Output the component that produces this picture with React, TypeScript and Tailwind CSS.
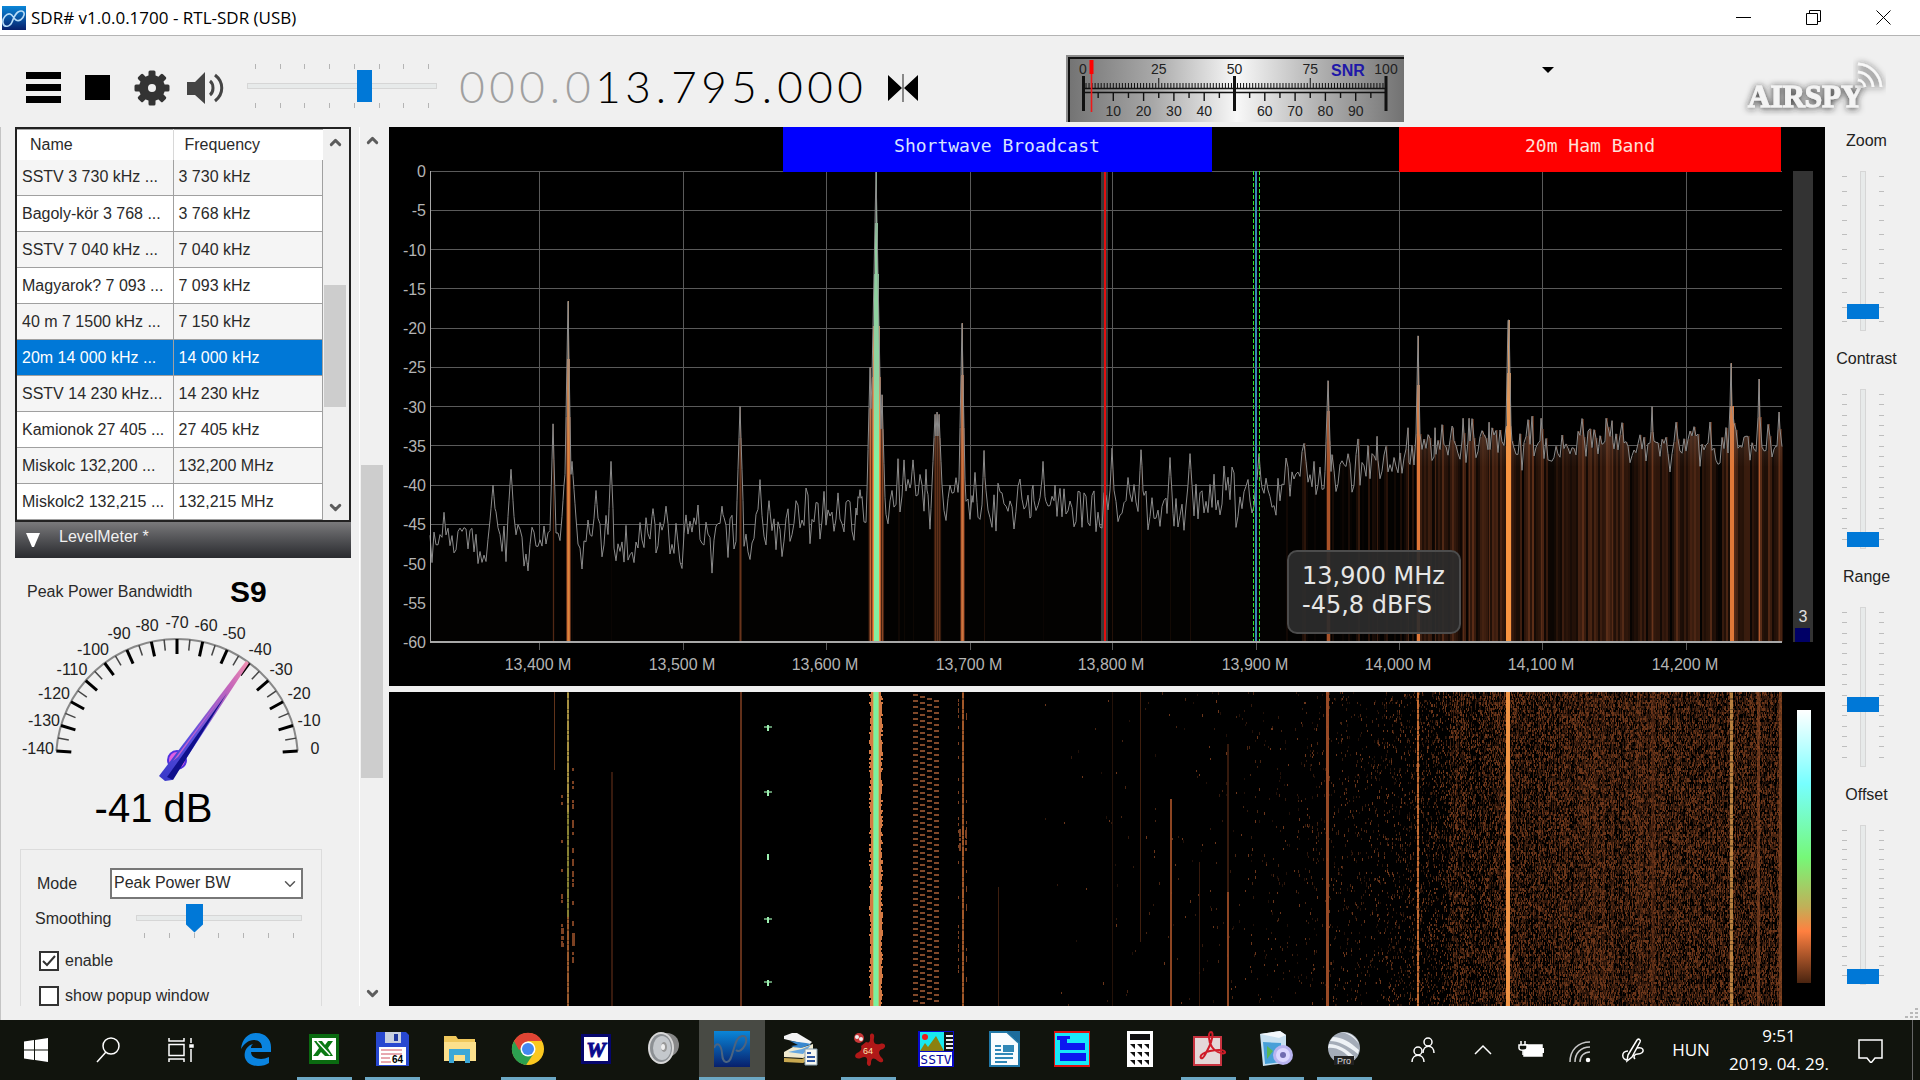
import type { ReactNode } from "react";
import { ChevronDown, ChevronUp } from "lucide-react";

const FONT = "'Liberation Sans', Arial, sans-serif";

/* ---------- helpers ---------- */

/** Small deterministic generator so the noise floor is the same on each render. */
function makeRandom(seed: number) {
  let s = seed;
  return () => {
    s = (s * 1664525 + 1013904223) % 4294967296;
    return s / 4294967296;
  };
}

function range(n: number) {
  return Array.from({ length: n }, (_, i) => i);
}

function lerpTable(table: number[][], x: number) {
  if (x <= table[0][0]) return table[0][1];
  for (let i = 1; i < table.length; i++) {
    const [x1, y1] = table[i];
    const [x0, y0] = table[i - 1];
    if (x <= x1) return y0 + ((y1 - y0) * (x - x0)) / (x1 - x0);
  }
  return table[table.length - 1][1];
}

const palette: [number, number[]][] = [
  [-37.5, [3, 2, 1]],
  [-35, [40, 19, 9]],
  [-32, [84, 42, 22]],
  [-30, [104, 52, 28]],
  [-26, [190, 96, 50]],
  [-19, [248, 148, 64]],
  [-10, [240, 160, 80]],
];

function levelColor(db: number) {
  const channel = (c: number) => Math.round(lerpTable(palette.map(([l, rgb]) => [l, rgb[c]]), db));
  return `rgb(${channel(0)},${channel(1)},${channel(2)})`;
}

/* ---------- spectrum ---------- */

const PLOT = { left: 41, right: 1393, top: 44, bottom: 515 };
const dbToY = (db: number) => PLOT.top + (-db / 60) * (PLOT.bottom - PLOT.top);

const floor = [
  [41, -47.3], [210, -47.6], [350, -46.2], [430, -45.2], [470, -44], [490, -42.5],
  [540, -41.5], [620, -43.6], [723, -43.4], [810, -42], [870, -41], [910, -39],
  [950, -38.4], [1010, -36.8], [1050, -35.8], [1110, -35], [1393, -34.8],
];

// x, level, half width
const peaks = [
  [104, -40, 4], [122, -38, 4], [164, -32.2, 3], [175, -40, 3], [179, -16.6, 4], [183, -37, 5], [207, -40.7, 3],
  [222, -37, 3], [264, -43, 3], [277, -42.7, 3], [333, -42.7, 3], [351, -30, 4],
  [380, -42, 3], [449, -41, 3], [471, -40.6, 5], [487, 0, 7], [481, -25, 4], [493, -28.5, 4],
  [503, -40.7, 5], [515, -36.8, 4], [524, -36.8, 6], [537, -38, 3], [546, -31, 5], [548, -30.7, 5], [550, -31, 5],
  [573, -19.4, 4], [586, -38.4, 4], [595, -35.6, 3], [644, -40, 3], [654, -37, 4], [666, -40, 3],
  [723, -35.3, 4], [752, -35.5, 4], [781, -36.5, 4], [801, -36, 5], [870, -36, 6], [939, -26.7, 5],
  [988, -33.8, 4], [1019, -32.7, 3], [1029, -21, 4], [1046, -32.7, 3], [1053, -32.3, 3],
  [1064, -32.7, 3], [1074, -31.5, 5], [1080, -31.5, 5], [1100, -32, 4], [1119, -19, 4], [1120, -19, 4],
  [1152, -31.5, 5], [1217, -31.5, 5], [1223, -31.8, 5], [1263, -30, 5], [1287, -32, 4],
  [1342, -24.5, 4], [1370, -26.5, 4], [1390, -30.7, 7],
];

const trace = (() => {
  const random = makeRandom(1700);
  const points: { x: number; db: number }[] = [];
  let slow = 0;
  for (let x = PLOT.left; x <= PLOT.right; x++) {
    slow = slow * 0.6 + (random() - 0.5) * 2.6;
    const spread = x > 1000 ? 3.6 : 5.2;
    let db = lerpTable(floor, x) + slow + (random() - 0.5) * spread;
    if (random() > 0.95) db += x > 1000 ? 1.5 : 2.5;
    let onPeak = false;
    for (const [px, level, half] of peaks) {
      const d = Math.abs(x - px);
      if (d >= half) continue;
      const value = level - (d / half) * (level + 46);
      if (value > db) {
        db = value;
        onPeak = true;
      }
    }
    if (onPeak || x % 2 === 1) points.push({ x, db });
  }
  return points;
})();

const tracePath = trace.map((p, i) => `${i ? "L" : "M"}${p.x} ${dbToY(p.db).toFixed(1)}`).join("");
const fillPath = `${tracePath}L${PLOT.right} ${PLOT.bottom}L${PLOT.left} ${PLOT.bottom}Z`;

// strong narrow signals keep one color over a few pixels
const carriers: [number, number, string][] = [
  [487, 2, "#84f0a0"],
  [179, 0, "#d8883c"],
  [573, 0, "#c87840"],
  [939, 1, "#a85228"],
  [1029, 1, "#e07838"],
  [1119, 2, "#f89440"],
  [1342, 1, "#e07838"],
];

function columnColor(x: number, db: number) {
  const carrier = carriers.find(([cx, half]) => Math.abs(x - cx) <= half);
  return carrier ? carrier[2] : levelColor(db);
}

const freqTicks: [number, string][] = [
  [150, "13,400 M"], [294, "13,500 M"], [437, "13,600 M"], [581, "13,700 M"], [723, "13,800 M"],
  [867, "13,900 M"], [1010, "14,000 M"], [1153, "14,100 M"], [1297, "14,200 M"],
];

function Spectrum() {
  return (
    <svg viewBox="0 0 1436 559" className="block h-full w-full bg-black" role="img" aria-label="Spectrum">
      <defs>
        <linearGradient id="veil" x1="0" y1="44" x2="0" y2="340" gradientUnits="userSpaceOnUse">
          <stop offset="0" stopColor="#a0a0a0" stopOpacity="0.5" />
          <stop offset="0.7" stopColor="#a0a0a0" stopOpacity="0.35" />
          <stop offset="1" stopColor="#a0a0a0" stopOpacity="0" />
        </linearGradient>
      </defs>
      <g stroke="#5a5a5a" shapeRendering="crispEdges">
        {range(12).map((i) => (
          <line key={i} x1={PLOT.left} x2={PLOT.right} y1={dbToY(-i * 5)} y2={dbToY(-i * 5)} />
        ))}
        {freqTicks.map(([x]) => (
          <line key={x} x1={x} x2={x} y1={PLOT.top} y2={PLOT.bottom + 8} />
        ))}
      </g>
      <path d={fillPath} fill="#030201" />
      <g shapeRendering="crispEdges">
        {trace.map((p, i) => {
          if (p.db < -37.5) return null;
          const next = trace[i + 1]?.x ?? p.x + 1;
          const y = dbToY(p.db);
          return <rect key={p.x} x={p.x} y={y} width={next - p.x} height={PLOT.bottom - y} fill={columnColor(p.x, p.db)} />;
        })}
      </g>
      <path d={fillPath} fill="url(#veil)" />
      <path d={tracePath} fill="none" stroke="#8c8c8c" strokeLinejoin="round" />
      <g stroke="#a8a8a8" strokeWidth="2" shapeRendering="crispEdges">
        <line x1={PLOT.left} x2={PLOT.left} y1={PLOT.top} y2={PLOT.bottom} strokeWidth="1" />
        <line x1={PLOT.left} x2={PLOT.right} y1={PLOT.bottom} y2={PLOT.bottom} />
      </g>

      {/* tuned frequency and the hovered one */}
      <rect x="712" y="44" width="7" height="470" fill="#8c8c8c" opacity="0.4" />
      <rect x="715" y="44" width="2" height="470" fill="#e01010" />
      <rect x="866" y="44" width="2" height="470" fill="#3a86b8" />
      <g stroke="#2ee82e" strokeWidth="1" strokeDasharray="4 2" shapeRendering="crispEdges">
        <line x1="864" x2="864" y1="44" y2="514" />
        <line x1="870" x2="870" y1="44" y2="514" />
      </g>

      <rect x="394" y="0" width="429" height="45" fill="#0000ff" />
      <rect x="1010" y="0" width="382" height="45" fill="#ff0000" />
      <g fontSize="18" textAnchor="middle" fontFamily="'DejaVu Sans Mono', monospace">
        <text x="608" y="25" fill="#d8e4ff">Shortwave Broadcast</text>
        <text x="1201" y="25" fill="#ffe0d8">20m Ham Band</text>
      </g>

      <g fill="#b4b4b4" fontSize="16" fontFamily={FONT}>
        {range(13).map((i) => (
          <text key={i} x="37" y={Math.round(dbToY(-i * 5)) + 6} textAnchor="end">{i ? -i * 5 : "0"}</text>
        ))}
        {freqTicks.map(([x, label]) => (
          <text key={label} x={x - 1} y="543" textAnchor="middle">{label}</text>
        ))}
      </g>

      <rect x="1404" y="44" width="20" height="471" fill="#333" />
      <rect x="1406" y="501" width="15" height="14" fill="#000066" />
      <text x="1414" y="495" fontSize="16" fill="#e0e0e0" textAnchor="middle" fontFamily={FONT}>3</text>

      <rect x="899" y="424" width="172" height="82" rx="9" fill="#2d2d2d" fillOpacity="0.92" stroke="#4c4c4c" strokeWidth="2" />
      <g fill="#e6e6e6" fontSize="24" fontFamily="'DejaVu Sans', Verdana, sans-serif">
        <text x="913" y="457">13,900 MHz</text>
        <text x="913" y="486">-45,8 dBFS</text>
      </g>
    </svg>
  );
}

/* ---------- waterfall ---------- */

const waterfallLines: { x: number; w: number; from: number; to: number; color: string; opacity: number }[] = [
  { x: 165, w: 1, from: 0, to: 78, color: "#a0552c", opacity: 0.6 },
  { x: 178, w: 2, from: 0, to: 120, color: "#b8a048", opacity: 0.9 },
  { x: 178, w: 2, from: 120, to: 225, color: "#a8a040", opacity: 0.8 },
  { x: 178, w: 2, from: 225, to: 314, color: "#c07038", opacity: 0.8 },
  { x: 222, w: 2, from: 80, to: 314, color: "#5c2c18", opacity: 0.6 },
  { x: 351, w: 2, from: 0, to: 314, color: "#7a3c20", opacity: 0.8 },
  { x: 573, w: 2, from: 0, to: 314, color: "#b4622e", opacity: 0.9 },
  { x: 609, w: 1, from: 195, to: 314, color: "#5a2c16", opacity: 0.7 },
  { x: 723, w: 1, from: 0, to: 314, color: "#5a2c16", opacity: 0.4 },
  { x: 751, w: 1, from: 0, to: 250, color: "#5a2c16", opacity: 0.7 },
  { x: 781, w: 2, from: 107, to: 314, color: "#9c4c26", opacity: 0.9 },
  { x: 810, w: 1, from: 170, to: 314, color: "#5a2c16", opacity: 0.6 },
  { x: 838, w: 2, from: 52, to: 200, color: "#5a2c16", opacity: 0.6 },
  { x: 838, w: 2, from: 200, to: 314, color: "#9c4c26", opacity: 0.9 },
  { x: 937, w: 3, from: 0, to: 314, color: "#a8522a", opacity: 0.9 },
  { x: 1028, w: 2, from: 0, to: 314, color: "#d87838", opacity: 0.9 },
  { x: 1117, w: 4, from: 0, to: 314, color: "#f09444", opacity: 1 },
  { x: 1263, w: 2, from: 0, to: 314, color: "#5a2c16", opacity: 0.5 },
  { x: 1341, w: 3, from: 0, to: 314, color: "#d89a4c", opacity: 0.8 },
  { x: 1368, w: 3, from: 0, to: 314, color: "#8a4824", opacity: 0.6 },
  { x: 1390, w: 3, from: 0, to: 314, color: "#8a4824", opacity: 0.7 },
];

// share of the column that is lit, by x
const density = [
  [620, 0], [800, 0.003], [900, 0.012], [980, 0.03], [1040, 0.1], [1058, 0.18], [1068, 0.4],
  [1084, 0.2], [1110, 0.34], [1196, 0.4], [1212, 0.5], [1230, 0.38], [1262, 0.5], [1275, 0.4], [1393, 0.42],
];

const speckle = (() => {
  const random = makeRandom(42);
  const shades = ["#211008", "#33190c", "#482411", "#6c361a"];
  const paths = shades.map(() => "");
  for (let x = 620; x < 1393; x++) {
    const share = lerpTable(density, x) * (0.6 + random() * 0.8);
    for (let y = 0; y < 313; y += 2) {
      if (random() > share * 1.7) continue;
      const shade = Math.min(3, Math.floor(random() * 4.2));
      paths[shade] += `M${x} ${y}h1v${random() > 0.6 ? 3 : 2}h-1z`;
    }
  }
  return shades.map((color, i) => ({ color, d: paths[i] }));
})();

const carrier = (() => {
  const random = makeRandom(9);
  return range(157).map((i) => {
    const left = 4 + Math.round(random() * 2);
    const right = 4 + Math.round(random() * 2);
    return { y: i * 2, x: 487 - left - 1, w: left + right + 2 };
  });
})();

const drift = (() => {
  let d = "";
  for (let col = 0; col < 4; col++) {
    for (let y = 2 + col * 2; y < 312; y += 6) d += `M${524 + col * 7} ${y}h5v2h-5z`;
  }
  return d;
})();

const sideband = (() => {
  const random = makeRandom(77);
  let d = "";
  for (let i = 0; i < 46; i++) d += `M${random() > 0.75 ? 172 : 183} ${Math.round(75 + random() * 200)}h2v3h-2z`;
  for (let i = 0; i < 50; i++) d += `M${random() > 0.5 ? 569 : 577} ${Math.round(random() * 300)}h1v3h-1z`;
  for (let i = 0; i < 16; i++) d += `M${random() > 0.5 ? 570 : 576} ${Math.round(135 + random() * 22)}h2v3h-2z`;
  for (let i = 0; i < 10; i++) d += `M${random() > 0.6 ? 172 : 183} ${Math.round(236 + random() * 16)}h3v4h-3z`;
  return d;
})();

function Waterfall() {
  return (
    <svg viewBox="0 0 1436 314" preserveAspectRatio="none" className="block h-full w-full bg-black" role="img" aria-label="Waterfall">
      <defs>
        <linearGradient id="scale" x1="0" y1="0" x2="0" y2="1">
          <stop offset="0" stopColor="#fff" />
          <stop offset="0.27" stopColor="#7ff" />
          <stop offset="0.54" stopColor="#76f878" />
          <stop offset="0.72" stopColor="#c0b058" />
          <stop offset="0.81" stopColor="#ff8040" />
          <stop offset="1" stopColor="#4a2410" />
        </linearGradient>
      </defs>
      <g shapeRendering="crispEdges">
        {speckle.map((s) => (
          <path key={s.color} d={s.d} fill={s.color} />
        ))}
        {waterfallLines.map((l, i) => (
          <rect key={i} x={l.x} y={l.from} width={l.w} height={l.to - l.from} fill={l.color} opacity={l.opacity} />
        ))}
        <path d="M179 0v314M1342 0v314M573 0v314M1028 0v314" stroke="#000" strokeOpacity="0.35" strokeWidth="3" strokeDasharray="1 5 2 9 1 3" />
        <path d={sideband} fill="#b05c30" opacity="0.7" />
        <path d={drift} fill="#b8683c" opacity="0.7" />
        {carrier.map((c) => (
          <rect key={c.y} x={c.x} y={c.y} width={c.w} height="2" fill="#d47a44" />
        ))}
        <rect x="484" y="0" width="6" height="314" fill="#a4d070" />
        <rect x="485" y="0" width="4" height="314" fill="#7cf0a0" />
        {[36, 101, 165, 228, 291].map((y, i) => (
          <g key={y} fill="#9cf0b0">
            <rect x="378" y={y - 3} width="2" height="6" />
            {i % 3 !== 2 && <rect x="375" y={y - 2} width="8" height="2" opacity="0.6" />}
          </g>
        ))}
      </g>
      <rect x="1408" y="18" width="14" height="273" fill="url(#scale)" />
    </svg>
  );
}

/* ---------- top bar ---------- */

function TitleBar() {
  return (
    <header className="flex h-9 shrink-0 items-center border-b border-[#b4b4b4] bg-white">
      <svg viewBox="0 0 24 24" className="ml-0.5 size-6">
        <defs>
          <linearGradient id="sdr" x1="0" y1="0" x2="0" y2="1">
            <stop offset="0" stopColor="#0a86d8" />
            <stop offset="1" stopColor="#08206c" />
          </linearGradient>
        </defs>
        <rect width="24" height="24" fill="url(#sdr)" />
        <path d="M1 17c1 5 7 4 9-1s3-8 6-10 7-1 6 3-5 7-8 5-3-5-6-6-8 4-7 9z" fill="none" stroke="#b8dcf8" strokeWidth="1.6" />
      </svg>
      <h1 className="ml-[5px] flex-1 font-['Open_Sans',sans-serif] text-[17px] text-black">SDR# v1.0.0.1700 - RTL-SDR (USB)</h1>
      <div className="mr-0.5 flex">
        <WindowButton label="Minimize"><path d="M0 7.5h15" /></WindowButton>
        <WindowButton label="Restore"><path d="M.5 3.5h11v11H.5zM3.5 3V.5h11v11H12" /></WindowButton>
        <WindowButton label="Close"><path d="M.5.5l14 14M14.5.5l-14 14" /></WindowButton>
      </div>
    </header>
  );
}

function WindowButton({ label, children }: { label: string; children: ReactNode }) {
  return (
    <button aria-label={label} className="flex h-8 w-[70px] items-center justify-center">
      <svg viewBox="0 0 15 15" className="size-[15px]" fill="none" stroke="#000">{children}</svg>
    </button>
  );
}

function SnrMeter() {
  const pos = (v: number) => 17 + v * 3.03;
  return (
    <svg viewBox="0 0 338 67" className="h-[67px] w-[338px] shrink-0" role="img" aria-label="SNR">
      <defs>
        <linearGradient id="metal">
          <stop offset="0" stopColor="#747474" />
          <stop offset="0.25" stopColor="#a8a8a8" />
          <stop offset="0.5" stopColor="#f8f8f8" />
          <stop offset="0.75" stopColor="#b0b0b0" />
          <stop offset="1" stopColor="#727272" />
        </linearGradient>
      </defs>
      <rect width="338" height="67" fill="#8c8c8c" />
      <rect x="2" y="2" width="336" height="65" fill="#111" />
      <rect x="4" y="4" width="334" height="63" fill="url(#metal)" />
      <g stroke="#111">
        {range(101).map((i) => (
          <line key={i} x1={pos(i)} x2={pos(i)} y1={i % 25 ? 28 : 23} y2="33" />
        ))}
        {range(21).map((i) => (
          <line key={i} x1={pos(i * 5)} x2={pos(i * 5)} y1="37" y2={i % 2 ? 43 : 46} strokeWidth="1.4" />
        ))}
        <path d="M17 33.500H320M17 37.500H320" strokeWidth="1.5" />
        <path d="M17.500 21v35M168.500 21v35M320 21v35" strokeWidth="3" />
      </g>
      <g fontFamily={FONT} fontSize="14" fill="#222" textAnchor="middle">
        {[0, 25, 50, 75, 100].map((v) => (
          <text key={v} x={pos(v)} y="19">{v}</text>
        ))}
        {[10, 20, 30, 40, 60, 70, 80, 90].map((v) => (
          <text key={v} x={pos(v)} y="61">{v}</text>
        ))}
        <text x="282" y="21" fontSize="16" fontWeight="bold" fill="#2018a8">SNR</text>
      </g>
      <path d="M25.500 5v14" stroke="#f00" strokeWidth="4" />
      <path d="M25.500 19v38" stroke="#f01818" strokeWidth="1.6" />
    </svg>
  );
}

function Logo() {
  return (
    <svg viewBox="0 0 150 60" className="h-[60px] w-[150px] shrink-0" role="img" aria-label="Airspy">
      <defs>
        <filter id="halo" x="-20%" y="-40%" width="140%" height="180%">
          <feDropShadow dx="0" dy="1" stdDeviation="3.5" floodColor="#222" floodOpacity="1" />
        </filter>
      </defs>
      <g filter="url(#halo)">
        <text x="12" y="51" fontSize="31" fontWeight="bold" fill="#f4f4f4" stroke="#f4f4f4" fontFamily="'Liberation Serif', serif">AIRSPY</text>
      </g>
      <g fill="none" stroke="#f8f8f8" strokeWidth="2.5" filter="url(#halo)">
        <path d="M122 24a8 8 0 0 1 7 7" />
        <path d="M122 16a16 16 0 0 1 15 15" />
        <path d="M122 8a24 24 0 0 1 23 23" />
      </g>
    </svg>
  );
}

function Ticks({ count, className, vertical }: { count: number; className: string; vertical?: boolean }) {
  return (
    <div aria-hidden className={`flex justify-between ${vertical ? "flex-col" : ""} ${className}`}>
      {range(count).map((i) => (
        <span key={i} className={vertical ? "h-px w-[5px] bg-[#bebebe]" : "h-[5px] w-px bg-[#b4b4b4]"} />
      ))}
    </div>
  );
}

const trackH =
  "block h-8 w-full appearance-none bg-transparent [&::-webkit-slider-runnable-track]:h-[6px] [&::-webkit-slider-runnable-track]:border [&::-webkit-slider-runnable-track]:border-[#d6d6d6] [&::-webkit-slider-runnable-track]:bg-[#e7eaea] [&::-webkit-slider-thumb]:appearance-none [&::-webkit-slider-thumb]:bg-[#0078d7]";

function FrequencyDisplay() {
  return (
    <div className="flex font-[Lato,sans-serif] text-[44px] leading-[52px] font-light" aria-label="000.013.795.000">
      {"000.013.795.000".split("").map((c, i) => (
        <span key={i} className={`text-center ${c === "." ? "w-4" : "w-[30px]"} ${i < 5 ? "text-[#a0a0a0]" : "text-black"}`}>
          {c}
        </span>
      ))}
    </div>
  );
}

function Toolbar() {
  return (
    <div className="flex h-[91px] shrink-0 items-center pt-2 pl-6">
      <div className="flex items-center pt-1">
        <button aria-label="Menu" className="w-[61px]">
          <svg viewBox="0 0 38 34" className="h-[34px] w-[38px]"><path d="M2 1h35v7H2zM2 13h35v7H2zM2 25h35v7H2z" /></svg>
        </button>
        <button aria-label="Stop" className="w-[49px]">
          <span className="block size-[25px] bg-black" />
        </button>
        <button aria-label="Settings" className="w-[53px]">
          <svg viewBox="0 0 36 36" className="size-9" fill="#333">
            {range(8).map((i) => (
              <rect key={i} x="14.5" y="0.5" width="7" height="9" rx="1.5" transform={`rotate(${i * 45} 18 18)`} />
            ))}
            <path fillRule="evenodd" d="M18 5a13 13 0 1 0 0 26a13 13 0 1 0 0-26M18 14a4 4 0 1 1 0 8a4 4 0 1 1 0-8" />
          </svg>
        </button>
        <button aria-label="Mute" className="w-[60px]">
          <svg viewBox="0 0 38 34" className="h-[34px] w-[38px]" fill="#444">
            <path d="M0 11h8L18 1v32L8 24H0z" />
            <path d="M23 10c4 3 4 11 0 14M28 4c9 7 9 19 0 26" fill="none" stroke="#444" strokeWidth="3" />
          </svg>
        </button>
      </div>
      <div className="w-[190px]">
        <Ticks count={8} className="px-2" />
        <input
          type="range" aria-label="Volume" min="0" max="100" defaultValue="63"
          className={`${trackH} my-px [&::-webkit-slider-thumb]:-mt-[14px] [&::-webkit-slider-thumb]:h-8 [&::-webkit-slider-thumb]:w-[15px]`}
        />
        <Ticks count={8} className="px-2" />
      </div>
      <div className="ml-5"><FrequencyDisplay /></div>
      <button aria-label="Center tuning" className="ml-[22px] pt-1">
        <svg viewBox="0 0 32 28" className="h-7 w-8">
          <path d="M1 1l14 13L1 27zM31 1L17 14l14 13z" />
          <path d="M16 0v28" stroke="#888" strokeWidth="2" />
        </svg>
      </button>
      <div className="ml-[147px] pt-[6px]"><SnrMeter /></div>
      <button aria-label="More" className="mb-8 ml-[138px]">
        <svg viewBox="0 0 12 6" className="h-[6px] w-3"><path d="M0 0h12L6 6z" /></svg>
      </button>
      <div className="mr-[34px] ml-auto"><Logo /></div>
    </div>
  );
}

/* ---------- side panel ---------- */

const stations = [
  ["SSTV 3 730 kHz ...", "3 730 kHz"],
  ["Bagoly-kör 3 768 ...", "3 768 kHz"],
  ["SSTV 7 040 kHz ...", "7 040 kHz"],
  ["Magyarok? 7 093 ...", "7 093 kHz"],
  ["40 m 7 1500 kHz ...", "7 150 kHz"],
  ["20m 14 000 kHz ...", "14 000 kHz"],
  ["SSTV 14 230 kHz...", "14 230 kHz"],
  ["Kamionok 27 405 ...", "27 405 kHz"],
  ["Miskolc 132,200 ...", "132,200 MHz"],
  ["Miskolc2 132,215 ...", "132,215 MHz"],
];
const SELECTED = 5;

function StationTable() {
  return (
    <div className="flex border-2 border-[#222] bg-[#f0f0f0]">
      <table className="w-[306px] table-fixed border-collapse text-left whitespace-nowrap">
        <thead>
          <tr className="h-[30px] border-t border-[#a8a8a8] bg-white">
            <th className="w-[156px] border-r border-[#d8d8d8] pl-[13px] font-normal">Name</th>
            <th className="pl-[11px] font-normal">Frequency</th>
          </tr>
        </thead>
        <tbody>
          {stations.map(([name, freq], i) => (
            <tr
              key={name}
              className={`h-9 border-b border-[#a0a0a0] ${i === SELECTED ? "bg-[#0078d7] text-white" : i % 2 ? "bg-white" : "bg-[#f5f5f5]"}`}
            >
              <td className="border-r border-[#a0a0a0] pl-[5px]">{name}</td>
              <td className="border-r border-[#a0a0a0] pl-[5px]">{freq}</td>
            </tr>
          ))}
        </tbody>
      </table>
      <ScrollBar before="grow-[130]" thumb="grow-[121]" after="grow-[87]" />
    </div>
  );
}

function ScrollBar({ before, thumb, after }: { before: string; thumb: string; after: string }) {
  return (
    <div className="flex w-6 shrink-0 flex-col items-center self-stretch">
      <button aria-label="Scroll up" className="flex h-[26px] items-center"><ChevronUp size={17} strokeWidth={4} color="#5c5c5c" /></button>
      <div className={before} />
      <div className={`w-[22px] bg-[#cdcdcd] ${thumb}`} />
      <div className={after} />
      <button aria-label="Scroll down" className="flex h-[26px] items-center"><ChevronDown size={17} strokeWidth={4} color="#5c5c5c" /></button>
    </div>
  );
}

const dialLabels = [
  [23, 139], [29, 111], [39, 84], [57, 60], [78, 40], [104, 24], [132, 16], [162, 13],
  [191, 16], [219, 24], [245, 40], [266, 60], [284, 84], [294, 111], [300, 139],
];

function Dial() {
  const at = (i: number, r: number) => {
    const a = ((175.7 - i * 12.243) * Math.PI) / 180;
    return [162 + r * Math.cos(a), 151 - r * Math.sin(a)];
  };
  const [x0, y0] = at(0, 121);
  const [x1, y1] = at(14, 121);
  return (
    <svg viewBox="0 0 336 178" className="block h-[178px] w-[336px] shrink-0" role="img" aria-label="Level">
      <defs>
        <linearGradient id="needle" x1="145" y1="170" x2="234" y2="53" gradientUnits="userSpaceOnUse">
          <stop offset="0" stopColor="#3838c8" />
          <stop offset="0.35" stopColor="#5a50e0" />
          <stop offset="0.8" stopColor="#c868b8" />
          <stop offset="1" stopColor="#f090b0" />
        </linearGradient>
      </defs>
      <path d={`M${x0} ${y0}A121 121 0 0 1 ${x1} ${y1}`} fill="none" stroke="#888" strokeWidth="2" />
      {range(29).map((i) => {
        const major = i % 2 === 0;
        const [ax, ay] = at(i / 2, 121);
        const [bx, by] = at(i / 2, major ? 106 : 110);
        return <line key={i} x1={ax} y1={ay} x2={bx} y2={by} stroke={major ? "#000" : "#444"} strokeWidth={major ? 3 : 1.5} />;
      })}
      <g fontFamily={FONT} fontSize="16" fill="#222" textAnchor="middle">
        {dialLabels.map(([x, y], i) => (
          <text key={i} x={x} y={y + 6}>{i === 14 ? "0" : i * 10 - 140}</text>
        ))}
      </g>
      <circle cx="162" cy="151" r="9" fill="#e060e0" stroke="#5030e0" strokeWidth="2" />
      <path d="M144 167L231 52L234 54L157 171L150 172z" fill="url(#needle)" />
      <path d="M152 168L212 84L158 171z" fill="#10108c" />
      <path d="M158 152L226 61L163 148z" fill="#c060d0" />
    </svg>
  );
}

function CheckBox({ label, checked }: { label: string; checked?: boolean }) {
  return (
    <label className="flex h-5 items-center gap-[6px]">
      <span className="relative flex size-5">
        <input type="checkbox" defaultChecked={checked} className="peer size-5 appearance-none border-2 border-[#333] bg-white" />
        <svg viewBox="0 0 20 20" className="pointer-events-none absolute inset-0 hidden peer-checked:block">
          <path d="M4 10l4 4l8-9" fill="none" stroke="#333" strokeWidth="2" />
        </svg>
      </span>
      {label}
    </label>
  );
}

function LevelMeter() {
  return (
    <section className="flex min-h-0 flex-1 flex-col">
      <button className="flex h-9 w-full shrink-0 items-center bg-linear-to-b from-[#7a7a7c] to-[#2a2b2f] pl-[11px] text-left text-[#f0f0f0]">
        <svg viewBox="0 0 14 14" className="mr-[19px] h-[14px] w-[14px]"><path d="M0 0h14L8 14H6z" fill="#fff" /></svg>
        <span className="mb-1.5">LevelMeter *</span>
      </button>
      <div className="flex h-[51px] shrink-0 items-end pl-3">
        <span className="w-[203px] pb-[7px]">Peak Power Bandwidth</span>
        <strong className="text-[30px] leading-[34px] text-black">S9</strong>
      </div>
      <Dial />
      <p className="-mt-px w-[277px] text-center text-[40px] leading-[44px] text-black">-41 dB</p>
      <div className="mt-[19px] ml-[5px] min-h-0 w-[302px] flex-1 overflow-hidden border border-b-0 border-[#dcdcdc]">
        <div className="flex items-center pt-[18px]">
          <label htmlFor="mode" className="w-[89px] pl-4">Mode</label>
          <span className="relative w-[193px]">
            <select id="mode" className="block h-[31px] w-full appearance-none border-2 border-[#777] bg-white px-[2px] pb-0.5">
              <option>Peak Power BW</option>
            </select>
            <ChevronDown size={18} strokeWidth={2} color="#555" className="pointer-events-none absolute top-[7px] right-1" />
          </span>
        </div>
        <div className="mt-1 flex h-10 items-start">
          <label htmlFor="smoothing" className="w-[115px] pt-[6px] pl-[14px]">Smoothing</label>
          <div className="w-[166px]">
            <input
              id="smoothing" type="range" min="0" max="6" defaultValue="2"
              className={`${trackH} !h-[29px] [&::-webkit-slider-thumb]:-mt-[12px] [&::-webkit-slider-thumb]:h-[29px] [&::-webkit-slider-thumb]:w-[17px] [&::-webkit-slider-thumb]:[clip-path:polygon(0_0,100%_0,100%_72%,50%_100%,0_72%)]`}
            />
            <Ticks count={7} className="mt-px px-2" />
          </div>
        </div>
        <div className="mt-2 flex flex-col gap-[15px] pl-[18px]">
          <CheckBox label="enable" checked />
          <CheckBox label="show popup window" />
        </div>
      </div>
    </section>
  );
}

/* ---------- right sliders ---------- */

const knobs = [
  { label: "Zoom", value: 8, ticks: 11 },
  { label: "Contrast", value: 1, ticks: 15 },
  { label: "Range", value: 38, ticks: 15 },
  { label: "Offset", value: 0, ticks: 16 },
];

function Knob({ label, value, ticks }: { label: string; value: number; ticks: number }) {
  const id = label.toLowerCase();
  return (
    <div className="flex h-[218px] flex-col items-center">
      <label htmlFor={id} className="pl-2 leading-5 text-[#222]">{label}</label>
      <div className="mt-[18px] flex h-[160px]">
        <Ticks vertical count={ticks} className="py-[7px]" />
        <input
          id={id} type="range" min="0" max="100" defaultValue={value}
          className="mx-[2px] block h-full w-8 appearance-none bg-transparent [direction:rtl] [writing-mode:vertical-lr] [&::-webkit-slider-runnable-track]:w-[6px] [&::-webkit-slider-runnable-track]:border [&::-webkit-slider-runnable-track]:border-[#d6d6d6] [&::-webkit-slider-runnable-track]:bg-[#e7eaea] [&::-webkit-slider-thumb]:-ml-[14px] [&::-webkit-slider-thumb]:h-[15px] [&::-webkit-slider-thumb]:w-8 [&::-webkit-slider-thumb]:appearance-none [&::-webkit-slider-thumb]:bg-[#0078d7]"
        />
        <Ticks vertical count={ticks} className="py-[7px]" />
      </div>
    </div>
  );
}

/* ---------- taskbar ---------- */

const apps: { name: string; running?: boolean; active?: boolean; icon: ReactNode }[] = [
  {
    name: "Edge",
    icon: <path fill="#0a84e0" d="M1 16C2 6 8 0 16 0c10 0 15 7 15 14v5H11c0 5 5 7 10 7 3 0 5-1 8-2v6c-3 2-6 3-11 3C9 33 3 27 5 19c1-4 4-7 8-8-2 2-2 3-2 4h11c0-5-3-8-8-8-6 0-10 4-13 9z" />,
  },
  {
    name: "Excel",
    running: true,
    icon: (
      <>
        <rect x="1" y="1" width="30" height="30" fill="#0a6a10" />
        <rect x="4" y="5" width="24" height="22" fill="#fff" />
        <path d="M6 8h8l3 4 3-4h5l-5 7 5 8h-8l-4-4-3 4H5l6-8z" fill="#0a7a14" />
        <path d="M9 8l13 14" stroke="#fff" strokeWidth="1.5" />
      </>
    ),
  },
  {
    name: "Total Commander",
    running: true,
    icon: (
      <>
        <path d="M0-1h30l3 3v31H0z" fill="#2848d0" />
        <path d="M9-1h16v11H9z" fill="#c8d0e0" />
        <path d="M18 1h4v7h-4z" fill="#2038a0" />
        <path d="M3 14h27v18H3z" fill="#fff" />
        <path d="M5 17h21M5 21h21M5 25h9M5 29h10" stroke="#d05060" />
        <text x="16" y="30" fontSize="10" fontWeight="bold" fontFamily={FONT}>64</text>
      </>
    ),
  },
  {
    name: "File Explorer",
    icon: (
      <>
        <path d="M0 3h12l2 3h17v22H0z" fill="#f0c85c" />
        <path d="M0 9h32v19H0z" fill="#fce08c" />
        <path d="M5 16h21v14h-5v-8H10v8H5z" fill="#3ca8d8" />
      </>
    ),
  },
  {
    name: "Chrome",
    running: true,
    icon: (
      <>
        <circle cx="16" cy="16" r="16" fill="#fbc820" />
        <path d="M16 16L2 8A16 16 0 0 0 14 32l8-12z" fill="#2ca050" />
        <path d="M16 8h14a16 16 0 0 0-28 0l5 9z" fill="#e04434" />
        <circle cx="16" cy="16" r="7.5" fill="#fff" />
        <circle cx="16" cy="16" r="6" fill="#4488f0" />
      </>
    ),
  },
  {
    name: "Word",
    icon: (
      <>
        <rect x="1" y="1" width="30" height="30" fill="#06066c" />
        <rect x="4" y="4" width="24" height="24" fill="#fff" />
        <text x="16" y="24" fontSize="22" fontWeight="bold" fontStyle="italic" textAnchor="middle" fill="#0a0a8c" stroke="#0a0a8c" fontFamily="'Liberation Serif', serif">W</text>
      </>
    ),
  },
  {
    name: "Speaker",
    icon: (
      <>
        <ellipse cx="19" cy="12" rx="12" ry="12" fill="#888" />
        <ellipse cx="13" cy="15" rx="13" ry="16" fill="#d8d8d8" />
        <ellipse cx="13" cy="15" rx="11" ry="14" fill="#8c9094" />
        <ellipse cx="14" cy="15" rx="9" ry="12" fill="#c4c8cc" />
        <ellipse cx="16" cy="14" rx="3" ry="5" fill="#999" />
        <ellipse cx="15" cy="14" rx="2" ry="3" fill="#eee" />
      </>
    ),
  },
  {
    name: "SDR#",
    running: true,
    active: true,
    icon: (
      <>
        <rect x="-2" y="-2" width="36" height="36" fill="url(#sdr)" />
        <path d="M-2 15c2-5 5-5 7 0s0 13 5 14 6-8 8-14 3-11 8-12 5 5 3 9-6 8-9 5" fill="none" stroke="#4c6480" strokeWidth="2" />
      </>
    ),
  },
  {
    name: "Scanner",
    icon: (
      <>
        <path d="M0 3l8-3h5l15 9-3 3L0 6z" fill="#f4f4f4" />
        <path d="M6 8l16 2 5 1-12 5-8-3 7-1z" fill="#3888d0" />
        <path d="M0 19l9-5 8 1 12-4v9l-10 5-19-1z" fill="#f0ead0" />
        <path d="M4 19l14-3 9-4-8 9z" fill="#68a8e0" />
        <path d="M0 25l18 1 11-5v4l-10 5-19-1z" fill="#c8a850" />
        <path d="M21 16h12v16H21z" fill="#f8f8f0" stroke="#88a0b0" />
        <path d="M23 20h4M23 24h8M23 28h8" stroke="#3058a0" strokeWidth="2" />
      </>
    ),
  },
  {
    name: "IrfanView",
    running: true,
    icon: (
      <>
        <path d="M14 9c5 2 4-3 4-7 2-3 5-1 4 3-1 5 1 7 6 6 5-2 7 3 3 5-5 1-5 5-1 9 3 3 0 6-4 3-5-5-7-2-7 2 0 5-5 3-4-1 1-5-2-6-6-4-5 2-8-2-4-5 4-2 5-4 4-7z" fill="#b01818" />
        <ellipse cx="7" cy="5" rx="5" ry="5" fill="#c83838" />
        <circle cx="5" cy="4" r="2" fill="#eee" />
        <circle cx="9" cy="6" r="2" fill="#eee" />
        <text x="11" y="21" fontSize="9" fill="#ffe8b0" fontFamily={FONT}>64</text>
      </>
    ),
  },
  {
    name: "SSTV",
    icon: (
      <>
        <rect x="-2" y="-2" width="36" height="36" fill="#0808c8" />
        <rect x="0" y="-1" width="24" height="19" fill="#18e8f0" />
        <path d="M0 18l5-8 3 4 8-11 8 15z" fill="#8c8010" />
        <circle cx="5" cy="4" r="3" fill="#f01818" />
        <rect x="24" y="-1" width="9" height="19" fill="#111" />
        <path d="M26 3h7M26 7h7M26 11h7M26 15h7" stroke="#eee" strokeWidth="2" />
        <rect x="0" y="19" width="32" height="14" fill="#fff" />
        <text x="16" y="31" fontSize="13" textAnchor="middle" fill="#0808a0" fontFamily="'DejaVu Sans Mono', monospace">SSTV</text>
      </>
    ),
  },
  {
    name: "Writer",
    icon: (
      <>
        <path d="M2-1h17l12 11v23H2z" fill="#f8fcff" stroke="#2078a8" strokeWidth="2" />
        <path d="M19-2h13v12z" fill="#1c6c9c" />
        <path d="M7 13h6M7 17h6M7 21h18M7 25h18M7 29h12" stroke="#3088b8" strokeWidth="2" />
        <rect x="15" y="12" width="11" height="7" fill="#3088b8" />
      </>
    ),
  },
  {
    name: "Logger",
    icon: (
      <>
        <rect x="-2" y="-2" width="36" height="36" fill="#e01010" />
        <rect x="-1" y="0" width="34" height="32" fill="#18e8f8" />
        <path d="M1 3h13v3h-3v4h18v7H4V7H1zM4 20h26v8H4z" fill="#0c18f0" />
      </>
    ),
  },
  {
    name: "Calculator",
    icon: (
      <>
        <rect x="3" y="-2" width="26" height="36" fill="#fff" />
        <rect x="6" y="1" width="20" height="6" fill="#111" />
        {range(9).map((i) => (
          <path key={i} d={`M${6 + (i % 3) * 7} ${11 + Math.floor(i / 3) * 8}h5v5z`} fill="#111" />
        ))}
      </>
    ),
  },
  {
    name: "PDF",
    running: true,
    icon: (
      <>
        <rect x="1" y="3" width="29" height="30" fill="#c83440" />
        <rect x="3" y="5" width="25" height="26" fill="#e4d8d8" />
        <path d="M9 25c-2-3 4-6 9-7s14-2 15 1-9 1-13-5-4-15-1-15 1 9-2 15-6 13-8 11z" fill="none" stroke="#d01c28" strokeWidth="2" />
      </>
    ),
  },
  {
    name: "Installer",
    running: true,
    icon: (
      <>
        <path d="M0 1l20-3 6 4v28L3 33z" fill="#c8e0f0" />
        <path d="M3 9l18 1v19L5 31z" fill="#48a0d8" />
        <path d="M7 13l6 5-6 8z" fill="#58b858" />
        <path d="M0 1l20-3 6 4-7 3z" fill="#f4f8fc" />
        <circle cx="23" cy="22" r="10" fill="#b8b4f0" />
        <circle cx="23" cy="22" r="7" fill="#dcd8ff" />
        <circle cx="23" cy="22" r="3" fill="#706cb0" />
      </>
    ),
  },
  {
    name: "Google Earth Pro",
    running: true,
    icon: (
      <>
        <circle cx="16" cy="15" r="16" fill="#a4acb8" />
        <path d="M2 8c8 0 17 4 28 13l1-4C22 9 14 4 5 4zM12-1c8 1 14 5 19 12l-2-4C25 1 18-1 12-1zM0 15c9-1 17 4 24 12l3-3C18 16 10 11 1 11z" fill="#eef2f6" />
        <rect x="6" y="23" width="20" height="9" fill="#222" />
        <text x="16" y="31" fontSize="9" textAnchor="middle" fill="#ddd" fontFamily={FONT}>Pro</text>
      </>
    ),
  },
];

function TrayIcon({ label, width, children }: { label: string; width: string; children: ReactNode }) {
  return (
    <button aria-label={label} className={`flex h-full items-center justify-center ${width}`}>
      <svg viewBox="0 0 26 26" className="size-[26px]" fill="none" stroke="#fff" strokeWidth="1.5">{children}</svg>
    </button>
  );
}

function Taskbar() {
  return (
    <footer className="flex h-[60px] shrink-0 items-center bg-[#11140d] text-white">
      <TrayIcon label="Start" width="w-[72px]">
        <path stroke="none" fill="#fff" d="M1 4.500L11 3v9.500H1zM12 3l13-2v11.500H12zM1 13.500h10V23L1 21.500zM12 13.500h13V25l-13-2z" />
      </TrayIcon>
      <TrayIcon label="Search" width="w-[72px]">
        <circle cx="16" cy="9" r="8" />
        <path d="M11 15L2 25" />
      </TrayIcon>
      <TrayIcon label="Task View" width="w-[74px]">
        <path d="M1 1v3h15V1M1 7.500h15v11H1zM1 25v-3h15v3M23 1v5M23 12v13" />
        <path d="M22 8h3v2h-3z" fill="#fff" />
      </TrayIcon>
      <div className="ml-1 flex h-full">
        {apps.map((app) => (
          <button key={app.name} aria-label={app.name} className="flex h-full w-[68px] justify-center">
            <span
              className={`flex h-full items-center justify-center border-b-[3px] ${app.active ? "w-[66px] bg-[#484a44]" : "w-[55px]"} ${
                app.running ? "border-[#6ca8c4]" : "border-transparent"
              }`}
            >
              <svg viewBox="-2 -2 36 36" className="size-9">{app.icon}</svg>
            </span>
          </button>
        ))}
      </div>
      <div className="ml-auto flex h-full items-center">
        <TrayIcon label="People" width="w-[60px]">
          <circle cx="18" cy="5" r="4" />
          <path d="M13 16c0-9 11-9 11 0" />
          <circle cx="8" cy="14" r="4" />
          <path d="M2 25c0-9 12-9 12 0" />
        </TrayIcon>
        <TrayIcon label="Show hidden icons" width="w-[60px]"><path d="M5 17l8-8 8 8" /></TrayIcon>
        <TrayIcon label="Battery" width="w-9">
          <path d="M6 8h18v11H6z" fill="#fff" />
          <path d="M25 11v5" strokeWidth="2" />
          <path d="M3 4v4M7 4v4M1 8h8v3c0 3-8 3-8 0zM5 13v5" stroke="#fff" fill="#11140d" />
        </TrayIcon>
        <TrayIcon label="Network" width="w-[62px]">
          <path d="M3 25C3 13 11 5 23 5M8 25c0-9 6-15 15-15M13 25c0-6 4-10 10-10" stroke="#c8c8c8" />
          <circle cx="21" cy="23" r="1.5" fill="#fff" />
        </TrayIcon>
        <TrayIcon label="Pen" width="w-11">
          <path d="M8 18L17 3c2-2 4 0 3 2l-8 15-5 4zM8 14c-7 0-7 9 0 9M17 11c8-2 8 6 1 6-4 0-5 3-3 5" />
        </TrayIcon>
        <span className="w-[72px] text-center font-['Open_Sans',sans-serif] text-[17px]">HUN</span>
        <div className="w-[104px] text-center font-['Open_Sans',sans-serif] text-[17px] leading-7 whitespace-nowrap">
          <div>9:51</div>
          <div>2019. 04. 29.</div>
        </div>
        <TrayIcon label="Notifications" width="w-[78px]"><path d="M2 3h23v18h-7l-4 5-4-5H2z" /></TrayIcon>
        <div className="ml-[3px] h-full w-2 border-l border-[#666]" />
      </div>
    </footer>
  );
}

export default function App() {
  return (
    <div className="flex h-screen min-h-[1080px] w-full flex-col overflow-hidden bg-[#f0f0f0] font-['Liberation_Sans',Arial,sans-serif] text-[16px] leading-5 text-[#2a2a2a]">
      <TitleBar />
      <Toolbar />
      <main className="flex min-h-0 flex-1 border-l border-[#c4c4c4]">
        <aside className="mb-[14px] ml-[14px] flex w-[336px] shrink-0 flex-col overflow-hidden">
          <StationTable />
          <LevelMeter />
        </aside>
        <div className="mr-[5px] mb-[14px] ml-2 flex border-l border-white">
          <ScrollBar before="grow-[312]" thumb="grow-[313]" after="grow-[202]" />
        </div>
        <div className="mb-[14px] flex min-w-0 flex-1 flex-col gap-[6px]">
          <div className="min-h-0 flex-[559]"><Spectrum /></div>
          <div className="min-h-0 flex-[314]"><Waterfall /></div>
        </div>
        <aside className="flex w-[95px] shrink-0 flex-col pt-1">
          <div className="pr-[20px]">
            {knobs.map((knob) => (
              <Knob key={knob.label} {...knob} />
            ))}
          </div>
          <svg viewBox="0 0 14 10" className="mt-auto mr-px mb-[2px] ml-auto h-[10px] w-[14px]" fill="#b8b8b8" aria-hidden>
            <path d="M10 0h3v2h-3zM5 4h3v2H5zM10 4h3v2h-3zM0 8h3v2H0zM5 8h3v2H5zM10 8h3v2h-3z" />
          </svg>
        </aside>
      </main>
      <Taskbar />
    </div>
  );
}
